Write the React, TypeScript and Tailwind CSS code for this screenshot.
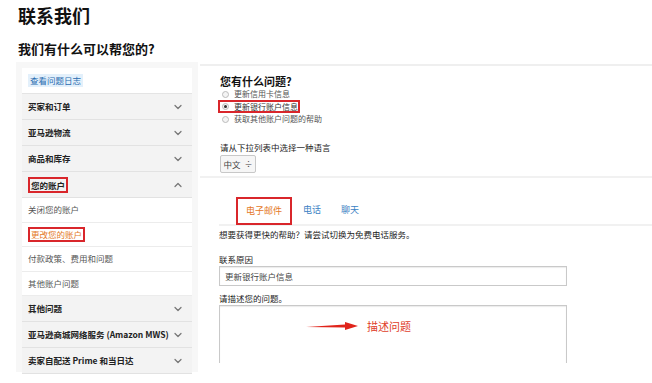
import { ChevronDown, ChevronUp } from "lucide-react";

const font = { fontFamily: '"Noto Sans CJK SC", "Noto Sans", sans-serif' };

type Row = { label: string; kind: "cat" | "open" | "sub" | "link"; mark?: boolean };

const rows: Row[] = [
  { label: "查看问题日志", kind: "link" },
  { label: "买家和订单", kind: "cat" },
  { label: "亚马逊物流", kind: "cat" },
  { label: "商品和库存", kind: "cat" },
  { label: "您的账户", kind: "open", mark: true },
  { label: "关闭您的账户", kind: "sub" },
  { label: "更改您的账户", kind: "sub", mark: true },
  { label: "付款政策、费用和问题", kind: "sub" },
  { label: "其他账户问题", kind: "sub" },
  { label: "其他问题", kind: "cat" },
  { label: "亚马逊商城网络服务 (Amazon MWS)", kind: "cat" },
  { label: "卖家自配送 Prime 和当日达", kind: "cat" },
];

function SideRow({ row }: { row: Row }) {
  if (row.kind === "link") {
    return (
      <div className="h-[26px] flex items-center px-[6px] bg-white border-b border-[#e4e4e4]">
        <span className="text-[8.5px] text-[#2a6cb0] bg-[#e3f0fb] px-[2px]">{row.label}</span>
      </div>
    );
  }
  if (row.kind === "sub") {
    return (
      <div className="h-[24.5px] flex items-center px-[6px] bg-white border-b border-[#ececec] whitespace-nowrap">
        {row.mark ? (
          <span className="text-[8.5px] text-[#e4781f] border-2 border-[#d9262b] px-[1px] leading-[11px]">{row.label}</span>
        ) : (
          <span className="text-[8.5px] text-[#555]">{row.label}</span>
        )}
      </div>
    );
  }
  return (
    <div className="h-[26px] flex items-center justify-between pl-[6px] pr-[8px] bg-[#f3f3f3] border-b border-[#e2e2e2] whitespace-nowrap">
      {row.mark ? (
        <span className="text-[8.5px] font-semibold text-[#222] border-2 border-[#d9262b] px-[1px] leading-[12px]">{row.label}</span>
      ) : (
        <span className="text-[8.5px] font-semibold text-[#222]">{row.label}</span>
      )}
      {row.kind === "open" ? (
        <ChevronUp className="w-[12px] h-[12px] text-[#777] shrink-0" strokeWidth={2.5} />
      ) : (
        <ChevronDown className="w-[12px] h-[12px] text-[#777] shrink-0" strokeWidth={2.5} />
      )}
    </div>
  );
}

function Radio({ checked }: { checked?: boolean }) {
  return (
    <span className="w-[7px] h-[7px] shrink-0 rounded-full border border-[#bbb] bg-[#f4f4f4] flex items-center justify-center">
      {checked ? <span className="w-[3px] h-[3px] rounded-full bg-[#333]" /> : null}
    </span>
  );
}

export default function App() {
  return (
    <div className="w-[652px] h-[383px] bg-white overflow-hidden text-[#111]" style={font}>
      <div className="pl-[18px] pt-[3px]">
        <h1 className="text-[18px] font-bold leading-[24px]">联系我们</h1>
        <h2 className="text-[13px] font-bold leading-[18px] mt-[13px]">我们有什么可以帮您的?</h2>
      </div>
      <div className="flex mt-[4px]">
        <div className="ml-[16px] w-[182px] bg-[#f7f7f7] px-[6px] pt-[6px] h-[310px]">
          {rows.map((r) => (
            <SideRow key={r.label} row={r} />
          ))}
        </div>
        <div className="flex-1 ml-[2px] mt-[2px] border-t-2 border-[#efefef] h-[308px]">
          <div className="pl-[20px] pt-[8px] h-[112px] border-b-2 border-[#f1f1f1]">
            <div className="text-[11px] font-bold leading-[14px]">您有什么问题?</div>
            <div className="text-[8px] text-[#555] leading-[12px] whitespace-nowrap">
              <div className="flex items-center gap-[5px] pl-[2px]">
                <Radio />
                <span>更新信用卡信息</span>
              </div>
              <div className="flex items-center gap-[5px] border-2 border-[#d9262b] w-[82px] -ml-[2px] pl-[2px] h-[13px]">
                <Radio checked />
                <span className="text-[#333]">更新银行账户信息</span>
              </div>
              <div className="flex items-center gap-[5px] pl-[2px]">
                <Radio />
                <span>获取其他账户问题的帮助</span>
              </div>
            </div>
            <div className="text-[8.5px] text-[#222] mt-[16px] leading-[12px]">请从下拉列表中选择一种语言</div>
            <div className="mt-[2px] w-[36px] h-[18px] border border-[#c8c8c8] rounded-[2px] bg-[#f6f6f6] text-[8.5px] text-[#444] flex items-center justify-center gap-[4px]">
              中文 <span className="text-[8px]">÷</span>
            </div>
          </div>
          <div className="pl-[19px]">
            <div className="flex items-end h-[48px] border-b-2 border-[#f1f1f1] pl-[17px] gap-[11px]">
              <div className="h-[28px] w-[56px] border-2 border-[#d9262b] flex items-center justify-center text-[9px] text-[#e4781f] -mb-[1px]">电子邮件</div>
              <div className="h-[28px] flex items-center text-[9px] text-[#3b82c4]">电话</div>
              <div className="h-[28px] flex items-center text-[9px] text-[#3b82c4] ml-[9px]">聊天</div>
            </div>
            <div className="text-[8.5px] text-[#222] mt-[2px] leading-[12px]">想要获得更快的帮助？请尝试切换为免费电话服务。</div>
            <div className="text-[8.5px] text-[#222] mt-[13px] leading-[12px]">联系原因</div>
            <div className="mt-[1px] w-[348px] h-[20px] border border-[#c9c9c9] shadow-[inset_0_1px_1px_rgba(0,0,0,0.08)] flex items-center px-[5px] text-[8.5px] text-[#444]">
              更新银行账户信息
            </div>
            <div className="text-[8.5px] text-[#222] mt-[6px] leading-[12px]">请描述您的问题。</div>
            <div className="mt-[1px] w-[348px] h-[58px] border border-[#c9c9c9] border-b-0 shadow-[inset_0_1px_1px_rgba(0,0,0,0.08)] flex items-start pt-[12px] pl-[85px] gap-[8px]">
              <svg width="54" height="12" viewBox="0 0 54 12" className="mt-[2px]">
                <path d="M1 7 L40 4.5 L40 2 L53 6 L40 10 L40 7.5 Z" fill="#e0241b" />
              </svg>
              <span className="text-[11px] text-[#e0402b] leading-[16px]">描述问题</span>
            </div>
          </div>
        </div>
      </div>
    </div>
  );
}
